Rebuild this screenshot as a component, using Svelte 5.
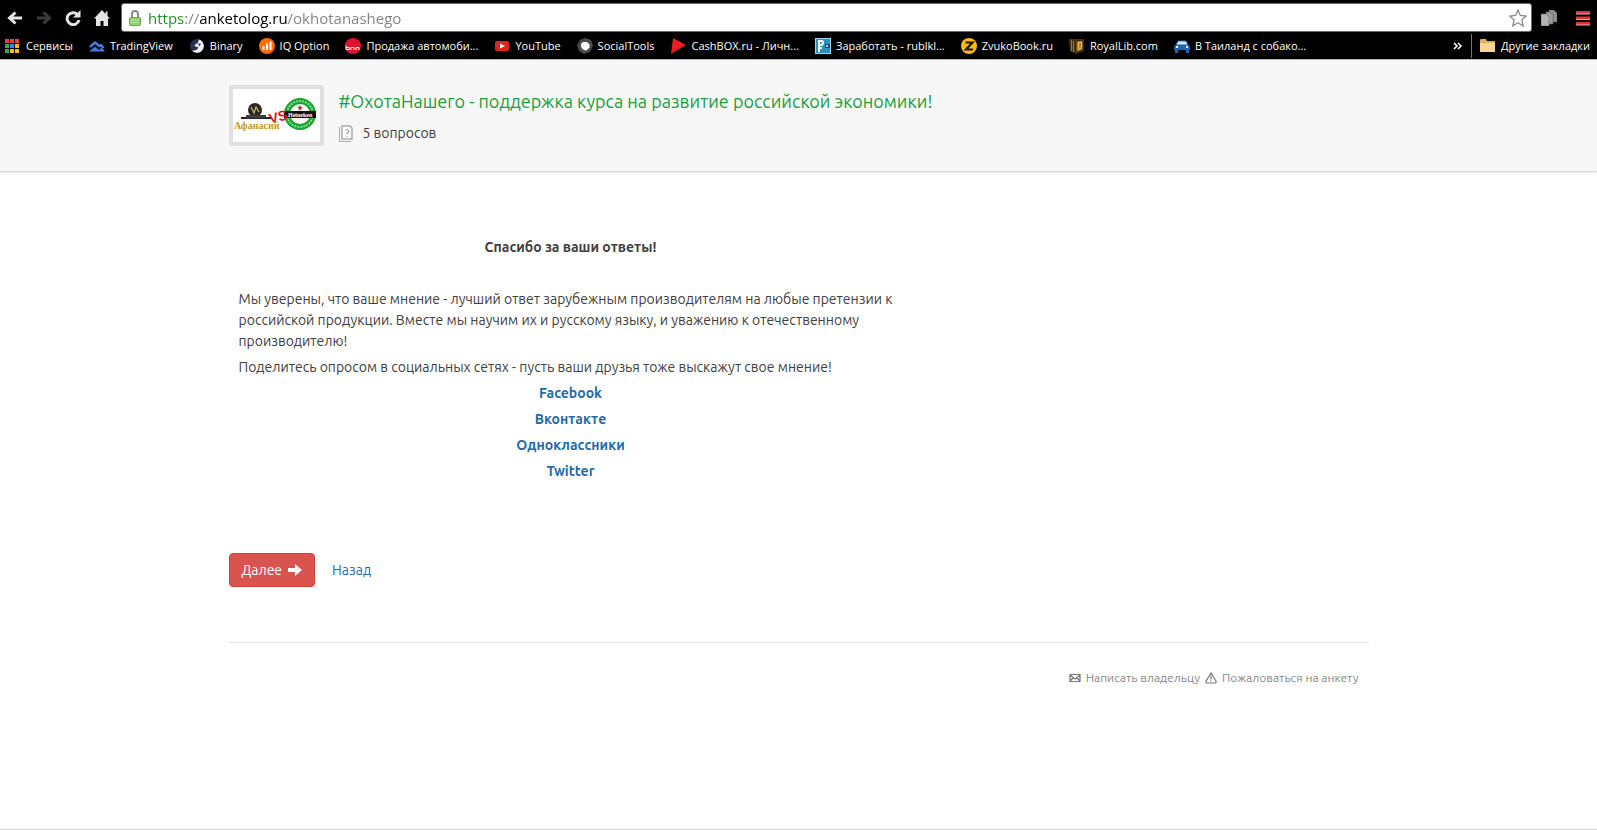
<script lang="ts">
	type Bookmark = { icon: string; label: string };

	const bookmarks: Bookmark[] = [
		{ icon: 'apps', label: 'Сервисы' },
		{ icon: 'tradingview', label: 'TradingView' },
		{ icon: 'binary', label: 'Binary' },
		{ icon: 'iq', label: 'IQ Option' },
		{ icon: 'auto', label: 'Продажа автомоби...' },
		{ icon: 'youtube', label: 'YouTube' },
		{ icon: 'social', label: 'SocialTools' },
		{ icon: 'cashbox', label: 'CashBOX.ru - Личн...' },
		{ icon: 'rublik', label: 'Заработать - rublkl...' },
		{ icon: 'zvuko', label: 'ZvukoBook.ru' },
		{ icon: 'royal', label: 'RoyalLib.com' },
		{ icon: 'car', label: 'В Таиланд с собако...' }
	];

	const appColors = ['#ea4335', '#ea4335', '#ea4335', '#34a853', '#4285f4', '#fbbc05', '#34a853', '#fbbc05', '#fbbc05'];

	const socialLinks = ['Facebook', 'Вконтакте', 'Одноклассники', 'Twitter'];

	let address = $state('https://anketolog.ru/okhotanashego');
</script>

{#snippet favicon(name: string)}
	<svg class="favicon" viewBox="0 0 16 16" aria-hidden="true">
		{#if name === 'apps'}
			{#each appColors as color, i}
				<rect x={(i % 3) * 5} y={Math.floor(i / 3) * 5 + 1} width="4" height="4" fill={color} />
			{/each}
		{:else if name === 'tradingview'}
			<path d="M1 9 6 4.500 10.500 8 12 7l2.500 3" fill="none" stroke="#3d7de0" stroke-width="2.600" stroke-linejoin="round" />
			<path d="M0 13.500h16l-2.500-3.200h-2L10 12 6 8.800z" fill="#3d7de0" />
		{:else if name === 'binary'}
			<circle cx="8" cy="8" r="7" fill="#2a3052" />
			<path d="M10 1.500a6.800 6.800 0 0 1-2 13.300q-3 0-5-2 5 0 6.500-3.300L5.500 8l1-2 2-.5z" fill="#f2f3f7" />
			<path d="M9 5.500h3l-1.500 3z" fill="#2a3052" />
		{:else if name === 'iq'}
			<circle cx="8" cy="8" r="8" fill="#ff6b0b" />
			<path d="M4.500 12V8M8 12V5.500M11.500 12V3.500" stroke="#fff" stroke-width="2" />
		{:else if name === 'auto'}
			<circle cx="8" cy="8" r="8" fill="#e3122c" />
			<path d="M1 7.500v4h3.500v-2H1M6 9.500V12m0-2.500h3V12m2 0V9.500h3V12" fill="none" stroke="#fff" />
		{:else if name === 'youtube'}
			<rect x="1" y="3" width="14" height="10" rx="2" fill="#e62117" />
			<path d="M6 5.500 11 8l-5 2.500z" fill="#fff" />
		{:else if name === 'social'}
			<path d="m8 0 6 2 2 6-3 6-6 2-5-3-2-6 3-5z" fill="#4a4a4a" />
			<path d="M6 4h4l2.500 2.500v3L10 12l-2 .5L5.500 11 4 8.500V6z" fill="#fff" />
		{:else if name === 'cashbox'}
			<path d="M2 0 15 7 0 16z" fill="#ec1c24" />
		{:else if name === 'rublik'}
			<rect width="16" height="16" fill="#9ed5ea" />
			<rect x="1" y="1" width="14" height="14" fill="#2793c1" />
			<path d="M4 14V3h3q2 1 0 4H4M3 10h4" fill="none" stroke="#fff" stroke-width="2" />
			<rect x="10" y="6" width="5" height="4" fill="#17506c" />
			<rect x="11" y="7" width="2" height="2" fill="#9ed5ea" />
		{:else if name === 'zvuko'}
			<circle cx="8" cy="8" r="8" fill="#fcb813" />
			<path d="M4.500 4.500h7L5 11.500h7" fill="none" stroke="#1b1605" stroke-width="2.200" />
		{:else if name === 'royal'}
			<path d="M0 1h15v12l-8 3-6-3z" fill="#4c3317" />
			<path d="M2.500 2v11M4.500 3v11" stroke="#7d7c3a" />
			<path d="m7 3 7-1v10l-7 2.500z" fill="#a9792b" stroke="#33210c" />
			<path d="M9.500 4.500v7l3-1.500V4.500z" fill="none" stroke="#e3c355" />
		{:else if name === 'car'}
			<path d="M4 3h8l2 4H2z" fill="#d8eafa" stroke="#1569b4" />
			<path d="M1 7h14l1 2v3h-1v3h-3v-3H4v3H1v-3H0V9z" fill="#1569b4" />
			<path d="M2 9h2M12 9h2" stroke="#fff" stroke-width="2" />
		{/if}
	</svg>
{/snippet}

<div class="page">
	<div class="browser">
		<div class="toolbar">
			<button class="tool" aria-label="Back">
				<svg viewBox="0 0 16 16"><path d="M15 8H3M8.500 2.500 2.500 8l6 5.500" fill="none" stroke="#e4e4e4" stroke-width="3" /></svg>
			</button>
			<button class="tool" aria-label="Forward" disabled>
				<svg viewBox="0 0 16 16"><path d="M1 8h12M7.500 2.500l6 5.500-6 5.500" fill="none" stroke="#3c3c3c" stroke-width="3" /></svg>
			</button>
			<button class="tool" aria-label="Reload">
				<svg viewBox="0 0 16 16">
					<path d="M12.500 4.500A6 6 0 1 0 14 10" fill="none" stroke="#e4e4e4" stroke-width="3" />
					<path d="M15.500 0v7.500H8z" fill="#e4e4e4" />
				</svg>
			</button>
			<button class="tool" aria-label="Home">
				<svg viewBox="0 0 16 16"><path d="M8 0 0 8.500h2V16h4.500v-5h3v5H14V8.500h2L13.500 6V1.500h-2V4z" fill="#e4e4e4" /></svg>
			</button>
			<div class="omnibox">
				<svg class="lock" viewBox="0 0 12 16" aria-hidden="true">
					<path d="M3 8V4q0-3 3-3t3 3v4" fill="none" stroke="#8b8b8b" stroke-width="2" />
					<rect x="0.500" y="7.500" width="11" height="8" rx="1" fill="#92d36e" stroke="#6aa355" />
					<path d="M2 10h8M2 12.500h8" stroke="#b2e694" />
				</svg>
				<input class="address" type="text" aria-label="Address" bind:value={address} />
				<button class="star" aria-label="Bookmark this page">
					<svg viewBox="0 0 18 18"><path d="m9 1 2.300 5.500 6 .5-4.500 4 1.400 6L9 13.800 3.800 17l1.400-6-4.500-4 6-.5z" fill="#fff" stroke="#8a8a8a" stroke-width="1.300" /></svg>
				</button>
			</div>
			<div class="extensions">
				<button class="tool" aria-label="Copies">
					<svg viewBox="0 0 16 16">
						<path d="M8 0h5l3 3v9H8z" fill="#8c8c8c" />
						<path d="M5 2h4l3 3v9H5z" fill="#9c9c9c" stroke="#5c5c5c" stroke-width=".6" />
						<path d="M0 4h5l3 3v9H0z" fill="#b5b5b5" stroke="#6c6c6c" stroke-width=".6" />
					</svg>
				</button>
				<button class="tool" aria-label="Menu">
					<svg viewBox="0 0 16 16">
						<path d="M1 2.500h14M1 8h14M1 13.500h14" stroke="#e8312c" stroke-width="3" />
						<path d="M1 4h14M1 9.500h14M1 15h14" stroke="#dcb4b2" />
					</svg>
				</button>
			</div>
		</div>
		<nav class="bookmarks">
			{#each bookmarks as bookmark (bookmark.label)}
				<a class="bookmark" href="#{bookmark.icon}">
					{@render favicon(bookmark.icon)}
					<span>{bookmark.label}</span>
				</a>
			{/each}
			<button class="more" aria-label="More bookmarks">
				<svg viewBox="0 0 10 8"><path d="m1 1 3 3-3 3M5 1l3 3-3 3" fill="none" stroke="#fff" stroke-width="1.600" /></svg>
			</button>
			<a class="bookmark other" href="#other">
				<svg class="favicon" viewBox="0 0 16 16" aria-hidden="true">
					<path d="M0 2q0-1 1-1h5l1 2h7q1 0 1 1v10H0z" fill="#e2ae57" />
					<path d="M0 5h15v9H0z" fill="#fbd591" />
				</svg>
				<span>Другие закладки</span>
			</a>
		</nav>
	</div>

	<header class="survey-header">
		<div class="container survey-intro">
			<svg class="survey-logo" viewBox="0 0 87 53" role="img" aria-label="Афанасий VS Heineken">
				<rect width="87" height="53" fill="#fff" />
				<circle cx="22" cy="21" r="7" fill="#2c2722" />
				<path d="m18 18 3 6 2-6 3 5" fill="none" stroke="#cdb67a" stroke-width="1.200" />
				<path d="M8 28h31v2H8z" fill="#262626" />
				<path d="M13 26h20v3H13z" fill="#3c3c3c" />
				<text class="beer" x="1" y="40" font-size="10">Афанасий</text>
				<circle cx="67" cy="25" r="16" fill="#17a52b" />
				<circle cx="67" cy="25" r="13" fill="none" stroke="#8ad594" stroke-width="2" stroke-dasharray="2 1" />
				<circle cx="67" cy="25" r="10" fill="#fff" />
				<path d="m67 16 1 2h2l-2 1.500 1 2-2-1-2 1 1-2-2-1.500h2z" fill="#e21b1b" />
				<path d="M51 22h32v7H51z" fill="#111" />
				<text class="heineken" x="55" y="28" font-size="6">Heineken</text>
				<text class="versus" x="36" y="33" font-size="14" transform="rotate(-14 44 29)">VS</text>
			</svg>
			<div>
				<h1>#ОхотаНашего - поддержка курса на развитие российской экономики!</h1>
				<p class="count">
					<svg viewBox="0 0 14 17" aria-hidden="true">
						<path d="M3 1h8l2 2v11H3z" fill="#fff" stroke="#aaa" stroke-width="1.500" />
						<path d="M.5 2v14.500H12" fill="none" stroke="#aaa" />
						<path d="M6.500 5.500Q8 3.500 9.500 5.500T8 8v1.500M8 11v1" fill="none" stroke="#888" />
					</svg>
					5 вопросов
				</p>
			</div>
		</div>
	</header>

	<main class="container">
		<div class="thanks">
			<p class="centered"><strong>Спасибо за ваши ответы!</strong></p>
			<p>&nbsp;</p>
			<p>
				Мы уверены, что ваше мнение - лучший ответ зарубежным производителям на любые претензии к
				российской продукции. Вместе мы научим их и русскому языку, и уважению к отечественному
				производителю!
			</p>
			<p>Поделитесь опросом в социальных сетях - пусть ваши друзья тоже выскажут свое мнение!</p>
			{#each socialLinks as link}
				<p class="centered"><a href="#{link}"><strong>{link}</strong></a></p>
			{/each}
		</div>
		<div class="actions">
			<button class="next">
				Далее
				<svg viewBox="0 0 14 12" aria-hidden="true"><path d="M0 4h7V0l7 6-7 6V8H0z" fill="#fff" /></svg>
			</button>
			<a href="#back">Назад</a>
		</div>
	</main>

	<footer class="container">
		<a href="#owner">
			<svg viewBox="0 0 12 12" aria-hidden="true"><path d="M1 2.500h10v7H1zM1 3l5 4 5-4M1 9l3-3M11 9 8 6" fill="none" stroke="#777" stroke-width="1.200" /></svg>
			Написать владельцу
		</a>
		<a href="#complain">
			<svg viewBox="0 0 12 12" aria-hidden="true"><path d="M6 1 .8 9.500q0 1.500 1 1.500h8.400q1 0 1-1.500zM6 4v3.500M6 8.500v1" fill="none" stroke="#777" stroke-width="1.200" /></svg>
			Пожаловаться на анкету
		</a>
	</footer>
</div>

<style>
	:global(body) {
		background: #fff;
		color: #404040;
		font-family: Ubuntu, 'Noto Sans', sans-serif;
		font-size: 14px;
		line-height: 21px;
	}

	.page {
		box-sizing: border-box;
		min-height: 100vh;
		border-bottom: 1px solid #d0d0d0;
	}

	button {
		padding: 0;
		border: 0;
		background: none;
		font: inherit;
	}

	a {
		color: #246ca8;
		text-decoration: none;
	}

	p,
	h1 {
		margin: 0;
	}

	svg {
		display: block;
		flex: none;
	}

	.browser {
		background: #000;
		border-bottom: 1px solid #b4b4b4;
		color: #fff;
		font-family: 'Segoe UI', 'Open Sans', sans-serif;
		font-size: 11px;
		line-height: 16px;
	}

	.toolbar {
		display: flex;
		align-items: center;
		gap: 13px;
		padding: 3px 6px 0 7px;
	}

	.tool svg {
		width: 16px;
		height: 16px;
	}

	.omnibox {
		display: flex;
		flex: 1;
		align-items: center;
		gap: 7px;
		box-sizing: border-box;
		height: 29px;
		margin: 0 -4px 0 -2px;
		padding: 0 4px 0 7px;
		border: 1px solid #6a6a6a;
		border-radius: 3px;
		background: #fff;
	}

	.extensions {
		display: flex;
		gap: 18px;
	}

	.lock {
		width: 12px;
		height: 16px;
	}

	.address {
		flex: 1;
		min-width: 0;
		padding: 0;
		border: 0;
		outline: 0;
		background: linear-gradient(to right, #1b8f1b 36px, #808080 36px 51px, #000 51px 140px, #808080 140px);
		background-clip: text;
		color: transparent;
		font: 15px/24px 'Segoe UI', 'Open Sans', sans-serif;
	}

	.star svg {
		width: 18px;
		height: 18px;
	}

	.bookmarks {
		display: flex;
		align-items: center;
		gap: 16px;
		height: 27px;
		padding: 0 7px 0 5px;
	}

	.bookmark {
		display: flex;
		align-items: center;
		gap: 5px;
		color: #fff;
		white-space: nowrap;
	}

	.favicon {
		width: 16px;
		height: 16px;
	}

	.more {
		margin-left: auto;
	}

	.more svg {
		width: 10px;
		height: 8px;
	}

	.other {
		margin-left: -8px;
		padding: 4px 0 4px 8px;
		border-left: 1px solid #777;
	}

	.container {
		width: calc(100% - 30px);
		max-width: 1140px;
		margin: 0 auto;
	}

	.survey-header {
		padding: 25px 0;
		border-bottom: 1px solid #dcdcdc;
		background: #f7f7f7;
		box-shadow: 0 1px 2px #e8e8e8;
	}

	.survey-intro {
		display: flex;
		gap: 15px;
	}

	.survey-logo {
		width: 87px;
		height: 53px;
		border: 4px solid #e0e0e0;
		border-radius: 3px;
	}

	.beer {
		fill: #c29a1c;
		font-family: 'Liberation Serif', serif;
		font-weight: bold;
	}

	.heineken {
		fill: #fff;
		font-family: 'Liberation Serif', serif;
		font-weight: bold;
	}

	.versus {
		fill: #e01020;
		font-family: 'Liberation Sans', sans-serif;
		font-weight: bold;
	}

	h1 {
		padding-top: 4px;
		color: #1a9e3e;
		font-size: 18px;
		font-weight: 400;
		line-height: 24px;
	}

	.count {
		display: flex;
		align-items: center;
		gap: 10px;
		padding-top: 10px;
	}

	.count svg {
		width: 14px;
		height: 17px;
	}

	.thanks {
		box-sizing: border-box;
		width: 60%;
		padding: 65px 10px 66px;
	}

	.thanks p {
		margin-bottom: 5px;
	}

	.centered {
		text-align: center;
	}

	.actions {
		display: flex;
		align-items: center;
		gap: 17px;
		padding-bottom: 55px;
		border-bottom: 1px solid #e2e2e2;
	}

	.next {
		display: flex;
		align-items: center;
		gap: 6px;
		height: 34px;
		padding: 0 12px;
		border: 1px solid #d43f3a;
		border-radius: 4px;
		background: #d9534f;
		color: #fff;
	}

	.next svg {
		width: 14px;
		height: 12px;
	}

	footer {
		display: flex;
		box-sizing: border-box;
		justify-content: flex-end;
		gap: 5px;
		padding: 24px 10px;
		font-size: 12px;
	}

	footer a {
		display: flex;
		align-items: center;
		gap: 5px;
		color: #888;
	}

	footer svg {
		width: 12px;
		height: 12px;
	}
</style>
